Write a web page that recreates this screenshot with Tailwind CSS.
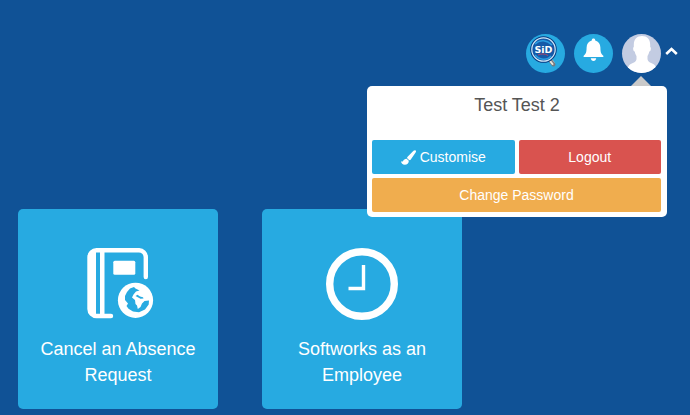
<!DOCTYPE html>
<html lang="en">
<head>
<meta charset="utf-8" />
<title>Dashboard</title>
<meta name="viewport" content="width=device-width, initial-scale=1" />
<script src="https://cdn.jsdelivr.net/npm/@tailwindcss/browser@4"></script>
</head>

<body class="min-h-screen bg-[#105296] font-['Liberation_Sans',Arial,sans-serif] text-white">
<header class="relative z-10 flex justify-end pt-[34px] pr-3">
  <nav class="flex items-center gap-[9px]">
    <button type="button" aria-label="SiD" class="size-[39px] rounded-full bg-[#27aae1]">
      <svg viewBox="0 0 39 39" class="size-full" aria-hidden="true">
        <path d="M24 25l3.500 4.500" stroke="#d5d9dc" stroke-width="3" />
        <path d="M25 27.500l2.500 3" stroke="#777b80" stroke-width="4" stroke-linecap="round" />
        <path d="M24.500 27.500l2 2.500" stroke="#e9e5dc" stroke-width="2" stroke-linecap="round" />
        <circle cx="17.500" cy="15.500" r="12.700" fill="#1559a8" stroke="#083d82" stroke-width="1.200" />
        <circle cx="17.500" cy="15.500" r="11.700" fill="none" stroke="#cfe5f5" stroke-width="1.200" />
        <path d="M9 10c5-5 12-4 17 1M9 21c4 5 12 6 16 1" fill="none" stroke="#2a9be0" stroke-width="1.500" />
        <path d="M12 21c3-1.500 7-1.500 10 .500" fill="none" stroke="#b04468" stroke-width="1" />
        <text x="17.500" y="19" text-anchor="middle" fill="#fff" font-family="DejaVu Sans" font-size="9.500" font-weight="700">SiD</text>
      </svg>
    </button>
    <button type="button" aria-label="Notifications" class="size-[39px] rounded-full bg-[#27aae1]">
      <svg viewBox="0 0 39 39" class="size-full" fill="#fff" aria-hidden="true">
        <path d="M19.500 4.500c1 0 1.700.7 1.700 1.700v.4c3.300.8 5.100 3.300 5.200 6.900.1 4.700.6 6.400 2.900 8.300.6.500.2 1.200-.5 1.200H10.200c-.7 0-1.100-.7-.5-1.200 2.300-1.900 2.800-3.600 2.900-8.300.1-3.600 1.900-6.100 5.200-6.900v-.4c0-1 .7-1.700 1.700-1.700zM16.800 24.200h5.400c-.1 1.600-1.200 2.700-2.700 2.700s-2.600-1.100-2.700-2.700z" />
      </svg>
    </button>
    <button type="button" aria-label="Account" aria-expanded="true" class="flex items-center gap-1">
      <svg viewBox="0 0 39 39" class="size-[39px] rounded-full bg-[#c3cce2]" fill="#fff" aria-hidden="true">
        <path d="M20 2c5 0 8.200 3.300 8.200 8.800v2.200c.9.300.8 2.200.3 3.500-.3.800-.8 1.100-1.300 1.100-.3 2-.9 3.300-1.700 4.400v3.200c.3 2.300 2.500 3.300 4.700 4.300 2.300 1 3.300 2 4 4.500v6H5.800v-6c.7-2.500 1.700-3.500 4-4.500 2.200-1 4.400-2 4.700-4.300V22c-.8-1.100-1.400-2.400-1.700-4.400-.5 0-1-.3-1.300-1.100-.5-1.300-.6-3.200.3-3.500v-2.200C11.800 5.300 15 2 20 2z" />
      </svg>
      <svg viewBox="0 0 13 8" class="mb-1.5 w-[13px]" fill="none" stroke="#fff" stroke-width="2.600" aria-hidden="true">
        <path d="M1.200 7l5.300-5 5.300 5" />
      </svg>
    </button>
  </nav>

  <!-- account menu -->
  <div class="absolute top-[86px] right-[23px] w-[300px] rounded-[5px] bg-white p-[5px] text-sm">
    <svg viewBox="0 0 20 10" class="absolute right-4 bottom-full w-5" fill="#c9c9c9" aria-hidden="true"><path d="M0 10L10 0l10 10z" /></svg>
    <h2 class="mb-[21px] text-center text-lg text-[#555]">Test Test 2</h2>
    <div class="mr-px grid grid-cols-2 gap-1">
      <button type="button" class="flex h-[34px] items-center justify-center gap-1 rounded-xs bg-[#27aae1]">
        <svg viewBox="0 0 15 15" class="size-[15px]" fill="#fff" aria-hidden="true">
          <path d="M14.600.4c.7.600.4 1.500 0 2.200L9.800 9.500c-.5.700-1.300.9-2 .3l-1.300-1.200c-.6-.6-.5-1.300.1-1.900L12.500.8c.7-.6 1.500-.9 2.100-.4zM5.600 8.700l2.200 2c.2 2.500-1.600 4-4 4C1.600 14.700.3 13.300 0 11.200c.7.400 1.600.5 2.100-.3.800-1.300 1.800-2.300 3.500-2.200z" />
        </svg>
        Customise
      </button>
      <button type="button" class="h-[34px] rounded-xs bg-[#d9534f]">Logout</button>
      <button type="button" class="col-span-2 h-[34px] rounded-xs bg-[#f0ad4e]">Change Password</button>
    </div>
  </div>
</header>

<main class="flex flex-wrap gap-11 px-[18px] pt-[136px]">
  <a href="#" class="flex size-[200px] flex-col items-center gap-4 rounded-[5px] bg-[#27aae1] px-5 pt-[39px] text-center text-lg leading-[26px]">
    <svg viewBox="0 0 72 72" class="size-[72px]" fill="none" aria-hidden="true">
      <path d="M29 68H14.500A7 7 0 0 1 7.500 61V9.200A7 7 0 0 1 14.500 2.200H56.500A7 7 0 0 1 63.800 9.500V29" stroke="#fff" stroke-width="4.400" stroke-linecap="round" />
      <path d="M14 2v66h-2a6 6 0 0 1-6-6V8a6 6 0 0 1 6-6zM18 2h4.500v66H18z" fill="#fff" />
      <rect x="31.300" y="12.700" width="22" height="14" rx="1.500" fill="#fff" />
      <circle cx="53.500" cy="52.300" r="17.600" fill="#fff" />
      <path d="M48 40.500l4-1.500 1.500 1.500 4 2-3.500 1-2.500 3-1.500 3 3 2.500.5 4 1.500 1.500.8 3.500 2.700-2 1.500-3.500 2.500-2.500 4.500-.5-.3 4-3.700 5-6 2.800-6-.8-4.500-2.800-2-2.700 1.500-2.500-3-3.500v-4l2-4z" fill="#27aae1" />
      <path d="M53.500 48l2-1.200 2.500 1.700 3 .7.500 1.300-3 .2z" fill="#27aae1" />
    </svg>
    Cancel an Absence Request
  </a>
  <a href="#" class="flex size-[200px] flex-col items-center gap-4 rounded-[5px] bg-[#27aae1] px-5 pt-[39px] text-center text-lg leading-[26px]">
    <svg viewBox="0 0 72 72" class="size-[72px]" fill="none" stroke="#fff" aria-hidden="true">
      <circle cx="36" cy="36" r="32.300" stroke-width="7.400" />
      <path d="M37.500 17v23.500H22.500" stroke-width="3.400" />
    </svg>
    Softworks as an Employee
  </a>
</main>

</body>
</html>
